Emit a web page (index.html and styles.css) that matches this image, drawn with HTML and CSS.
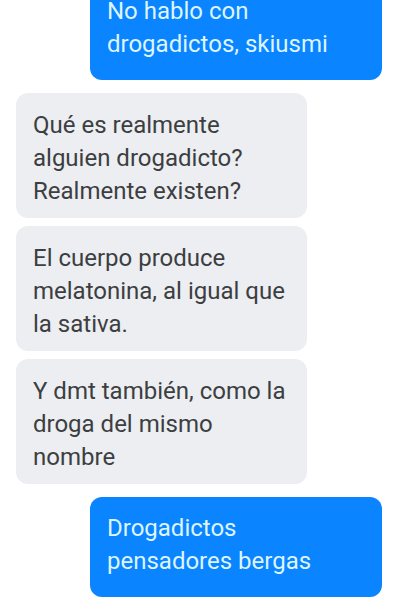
FILE: index.html
```html
<!DOCTYPE html>
<html lang="es">
<head>
<meta charset="utf-8">
<title>Chat</title>
<link rel="stylesheet" href="styles.css">
</head>
<body>
<main class="chat">
  <div class="msg msg-out">No hablo con drogadictos, skiusmi</div>
  <div class="msg msg-in msg-first">Qué es realmente alguien drogadicto? Realmente existen?</div>
  <div class="msg msg-in">El cuerpo produce melatonina, al igual que la sativa.</div>
  <div class="msg msg-in">Y dmt también, como la droga del mismo nombre</div>
  <div class="msg msg-out msg-last">Drogadictos pensadores bergas</div>
</main>
</body>
</html>
```
FILE: styles.css
```css
html, body {
  margin: 0;
  padding: 0;
  background: #ffffff;
  height: 100%;
  overflow: hidden;
}

.chat {
  display: flex;
  flex-direction: column;
  gap: 8px;
  margin-top: -20px;
  font-family: Roboto, "Noto Sans", sans-serif;
  font-size: 24px;
  line-height: 33px;
}

.msg {
  box-sizing: border-box;
  border-radius: 12px;
  padding-left: 17px;
  padding-right: 14px;
}

.msg-out {
  align-self: flex-start;
  margin-left: 90px;
  width: 292px;
  background: #0a84ff;
  color: #dcf5ff;
  padding-top: 15px;
  padding-right: 34px;
  padding-bottom: 19px;
}

.msg-in {
  align-self: flex-start;
  margin-left: 16px;
  width: 291px;
  background: #eceef1;
  color: #3c3e42;
  padding-top: 16px;
  padding-bottom: 10px;
}

.msg-first {
  margin-top: 5px;
}

.msg-last {
  margin-top: 5px;
}
```
